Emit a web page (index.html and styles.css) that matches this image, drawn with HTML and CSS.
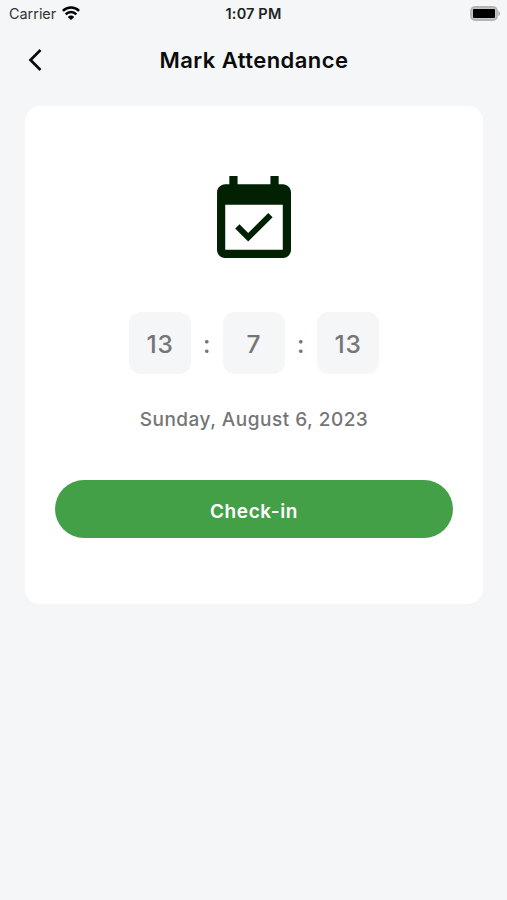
FILE: index.html
```html
<!DOCTYPE html>
<html lang="en">
<head>
<meta charset="utf-8">
<title>Mark Attendance</title>
<link rel="stylesheet" href="styles.css">
</head>
<body>
<div class="status">
  <div class="carrier"><span>Carrier</span>
    <svg class="wifi" viewBox="0 0 18 14" fill="none" stroke="#000"><path d="M.9 4.8a11.7 11.7 0 0 1 16.2 0M3.7 8.3a7.5 7.5 0 0 1 10.6 0" stroke-width="2.5"/><path d="M5.8 10.9a4.6 4.6 0 0 1 6.4 0L9 14z" fill="#000" stroke="none"/></svg>
  </div>
  <div class="clock">1:07 PM</div>
  <svg class="battery" viewBox="0 0 31 15"><rect x="1" y="1" width="26" height="13" rx="4" fill="#c6c7c8" stroke="#b3b4b5" stroke-width="1.8"/><rect x="3" y="3" width="22" height="9" rx="1"/><path d="M28.3 5c2.2.5 2.2 4.5 0 5z" fill="#aaabac"/></svg>
</div>
<header class="bar">
  <svg class="back" viewBox="0 0 14 24"><path d="M12.5 2 2.5 12l10 10" fill="none" stroke="#0b0b0b" stroke-width="2.7"/></svg>
  <h1>Mark Attendance</h1>
</header>
<main class="card">
  <svg class="calendar" viewBox="3 1 18 20" preserveAspectRatio="none"><path fill="#022102" d="M16.53 11.06 15.47 10l-4.88 4.88-2.12-2.12-1.06 1.06L10.59 17l5.94-5.94zM19 3h-1V1h-2v2H8V1H6v2H5c-1.11 0-1.99.9-1.99 2L3 19c0 1.1.89 2 2 2h14c1.1 0 2-.9 2-2V5c0-1.1-.9-2-2-2zm0 16H5V8h14v11z"/></svg>
  <div class="time"><span class="box">13</span><span class="colon">:</span><span class="box">7</span><span class="colon">:</span><span class="box">13</span></div>
  <p class="date">Sunday, August 6, 2023</p>
  <button class="checkin">Check-in</button>
</main>
</body>
</html>
```
FILE: styles.css
```css
* { box-sizing: border-box; }
body { margin: 0; min-height: 900px; background: #f4f6f7; font-family: Inter, sans-serif; color: #0b0b0b; }
.status { height: 27px; display: grid; grid-template-columns: 1fr auto 1fr; align-items: center; padding: 0 6px 0 9px; font-size: 14.4px; }
.carrier { display: flex; align-items: center; gap: 6px; color: #333; }
.wifi { width: 18px; height: 14px; margin-bottom: 1px; }
.clock { font-weight: 600; font-size: 14.5px; letter-spacing: .15px; margin-right: 3px; color: #222; }
.battery { width: 31px; height: 15px; justify-self: end; margin-bottom: 1px; }
.bar { height: 65px; display: grid; grid-template-columns: 60px 1fr 60px; align-items: center; }
.back { width: 14px; height: 24px; margin-left: 28px; }
h1 { margin: 0; font-size: 22px; font-weight: 600; text-align: center; letter-spacing: .45px; white-space: nowrap; padding-left: 1px; }
.card { width: 458px; height: 498px; margin: 14px 0 0 25px; border-radius: 15px; background: #fff; padding: 70px 30px 0; display: flex; flex-direction: column; align-items: center; }
.calendar { width: 74px; height: 82px; flex: none; }
.time { display: flex; align-items: center; margin-top: 54px; font-size: 24.5px; font-weight: 500; letter-spacing: .8px; color: #757575; }
.box { width: 62px; height: 62px; border-radius: 12px; background: #f4f6f7; display: grid; place-items: center; padding-top: 2px; }
.colon { width: 32px; text-align: center; padding-top: 2px; }
.date { margin: 34px 0 0; font-size: 19px; line-height: 24px; font-weight: 550; letter-spacing: .5px; color: #757575; white-space: nowrap; }
.checkin { margin-top: 48px; width: 398px; height: 58px; flex: none; border: 0; border-radius: 29px; background: #43a047; color: #fff; font: 600 19px Inter, sans-serif; letter-spacing: .6px; padding: 4px 0 0; }
```
